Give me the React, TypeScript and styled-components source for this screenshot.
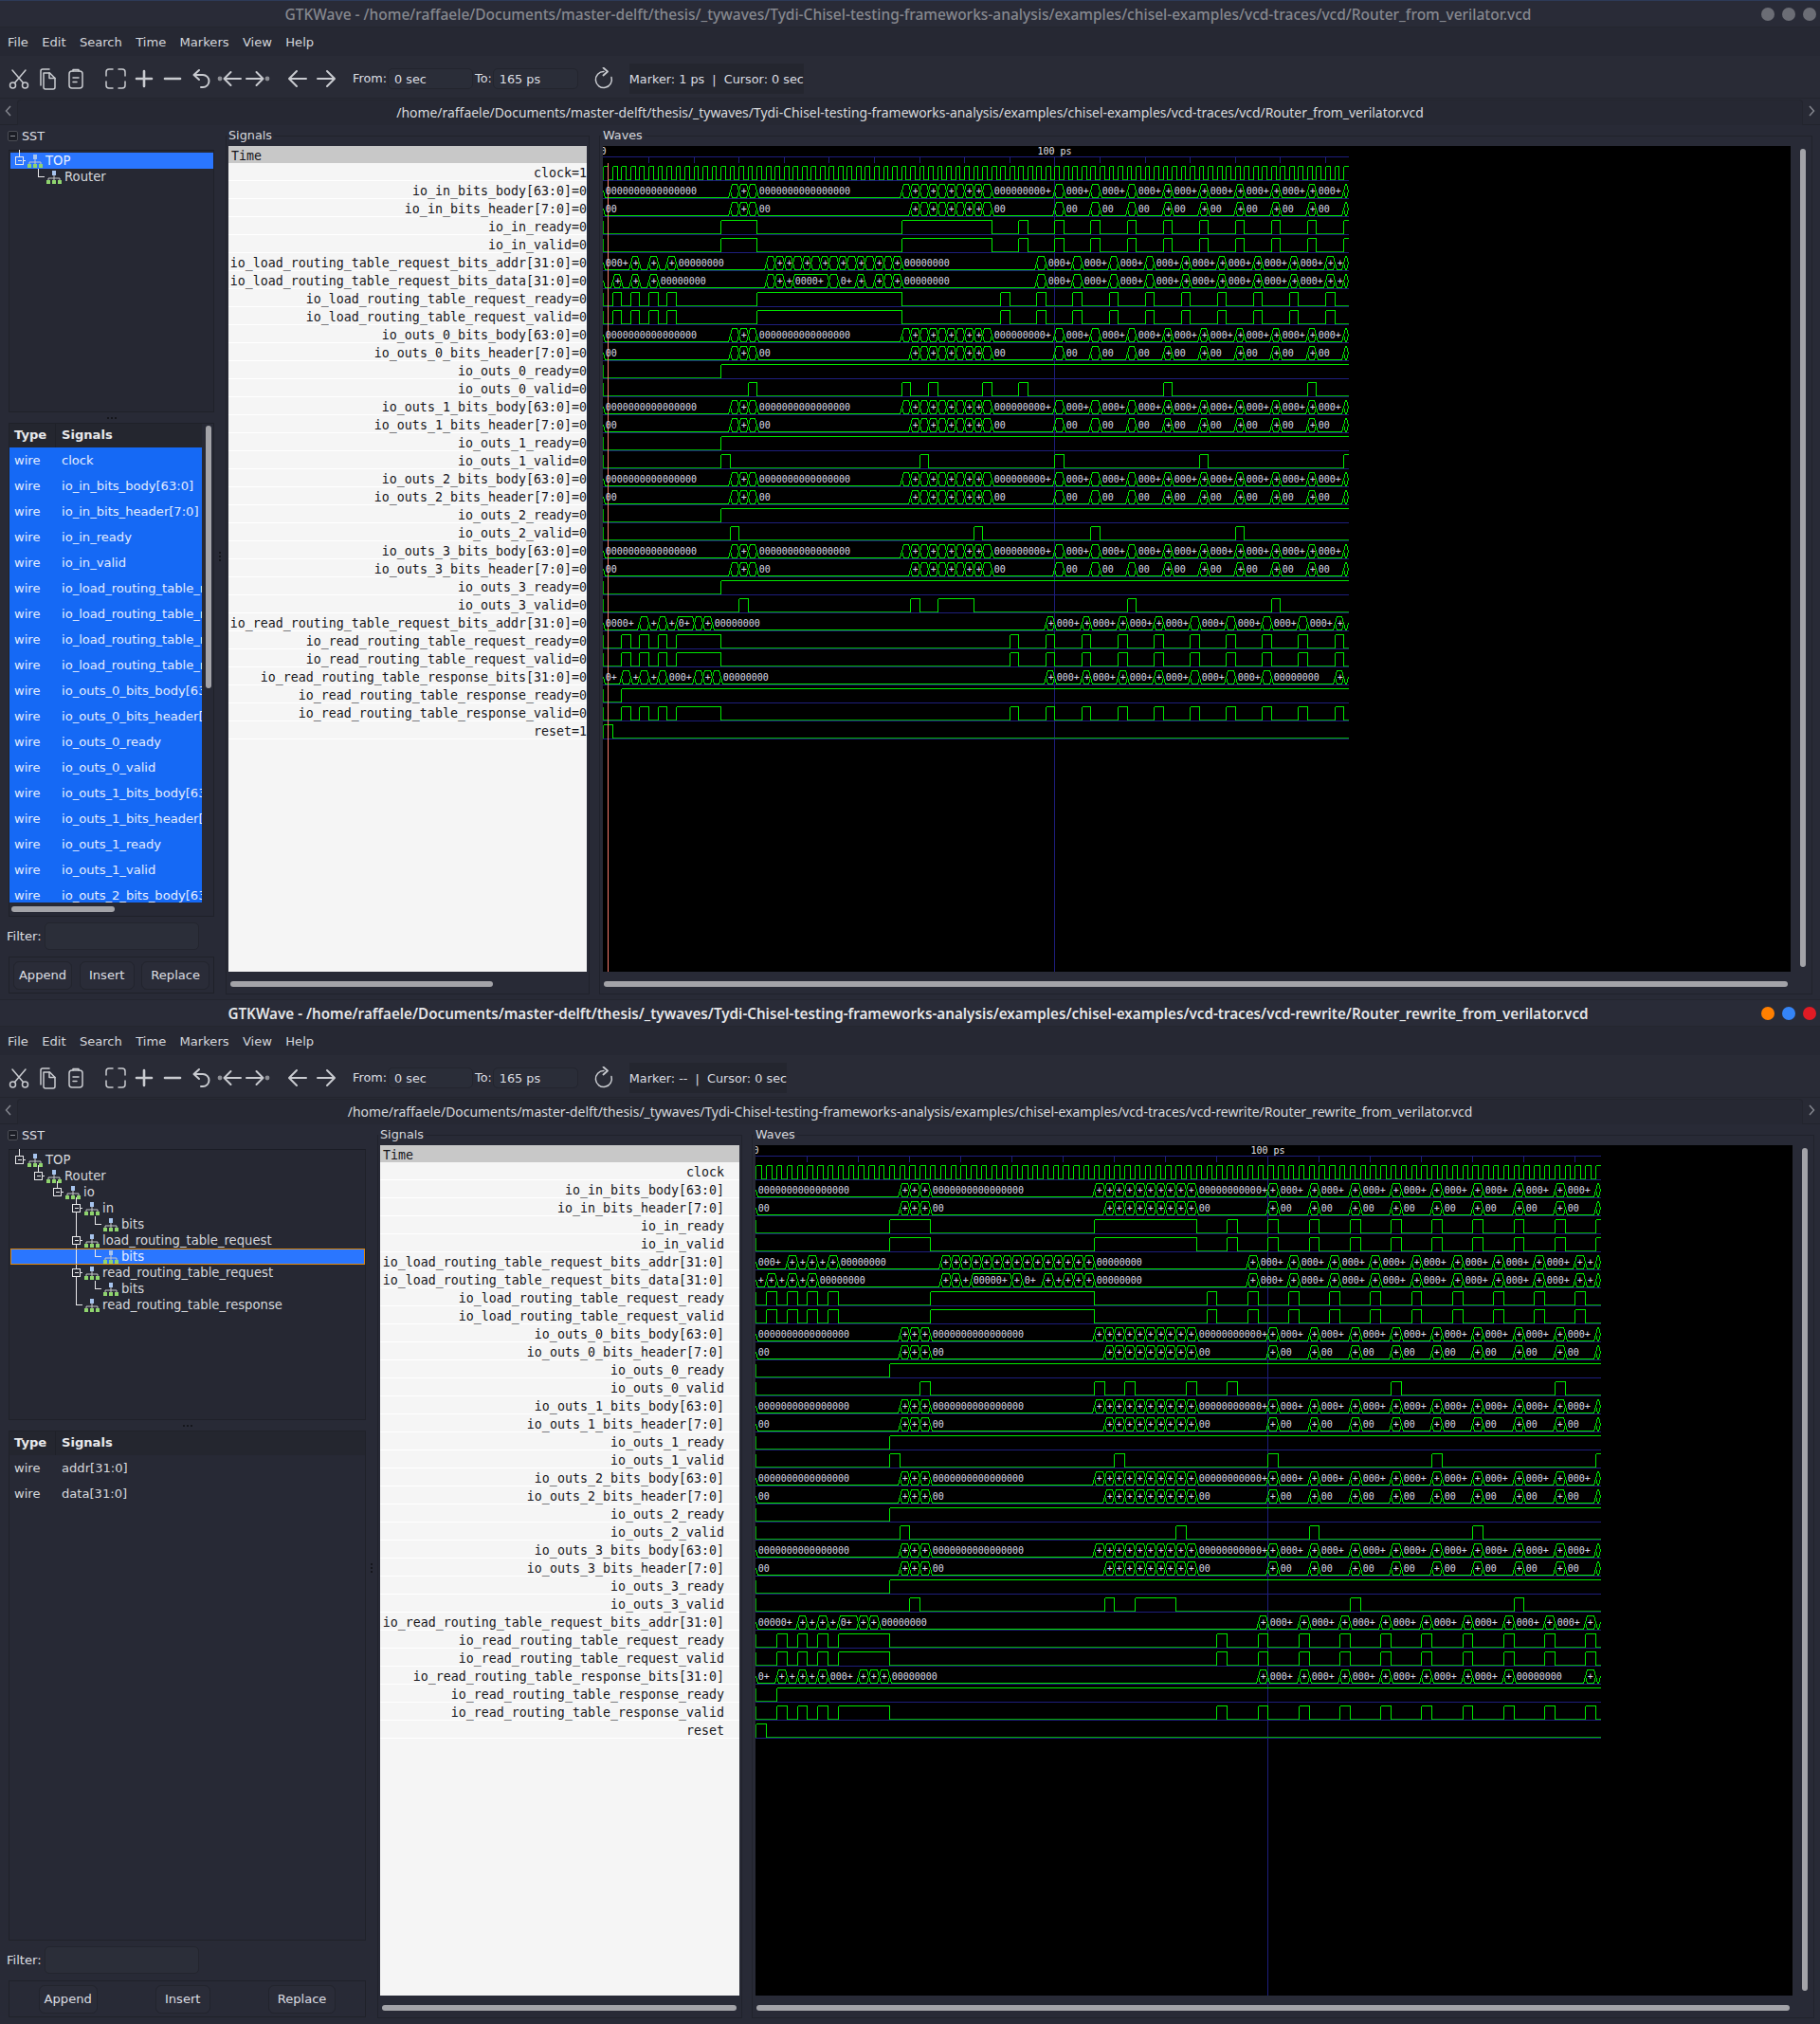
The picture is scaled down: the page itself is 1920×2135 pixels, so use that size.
import React from "react";
import styled, { createGlobalStyle } from "styled-components";

const UI = `"DejaVu Sans", "Noto Sans", sans-serif`;
const MONO = `"DejaVu Sans Mono", "Liberation Mono", monospace`;

const GlobalStyle = createGlobalStyle`
  html, body { margin: 0; padding: 0; background: #282a36; }
  * { box-sizing: border-box; }
`;

/* ---------- window chrome ---------- */
const Page = styled.div`
  width: 1920px;
  display: flex;
  flex-direction: column;
  font-family: ${UI};
  font-size: 13.1px;
  color: #dcdee3;
`;
const Win = styled.div<{ $h: number }>`
  height: ${(p) => p.$h}px;
  display: flex;
  flex-direction: column;
  background: #282a36;
  overflow: hidden;
`;
const TitleBar = styled.header<{ $active: boolean }>`
  height: 29px;
  flex: none;
  display: grid;
  grid-template-columns: 1fr auto 1fr;
  align-items: center;
  padding-right: 4px;
  background: #292b37;
  border-top: 1px solid ${(p) => (p.$active ? "#23252f" : "#2d3a58")};
  border-bottom: 1px solid #24262f;
  color: ${(p) => (p.$active ? "#e4e5e8" : "#85878e")};
  font-family: "Noto Sans", sans-serif;
  font-size: ${(p) => (p.$active ? 15.2 : 15.5)}px;
  font-weight: ${(p) => (p.$active ? 600 : 500)};
  white-space: nowrap;
`;
const TitleText = styled.span`
  grid-column: 2;
`;
const Dots = styled.div`
  grid-column: 3;
  justify-self: end;
  display: flex;
  gap: 8px;
`;
const Dot = styled.i<{ $c: string }>`
  display: block;
  width: 14px;
  height: 14px;
  border-radius: 50%;
  background: ${(p) => p.$c};
`;
const MenuBar = styled.nav`
  height: 30px;
  flex: none;
  display: flex;
  align-items: center;
  gap: 14.3px;
  padding: 0 0 0 8px;
  background: #262833;
  color: #d4d6db;
`;
const MenuItem = styled.span``;
const Toolbar = styled.div`
  height: 45px;
  flex: none;
  display: flex;
  align-items: center;
  padding: 3px 0 0 5px;
  background: #292b36;
  border-bottom: 1px solid #23252e;
  font-size: 12.8px;
`;
const ToolButton = styled.span<{ $gap?: number }>`
  width: 30px;
  height: 30px;
  margin-left: ${(p) => p.$gap || 0}px;
  display: flex;
  align-items: center;
  justify-content: center;
  svg { display: block; fill: none; stroke: #c9cbd0; stroke-width: 1.5; stroke-linecap: round; stroke-linejoin: round; }
`;
const ToolLabel = styled.span<{ $ml: number }>`
  margin-left: ${(p) => p.$ml}px;
  color: #dcdee3;
`;
const RangeInput = styled.span<{ $ml: number }>`
  width: 90px;
  height: 22px;
  margin-left: ${(p) => p.$ml}px;
  padding-left: 6px;
  line-height: 21px;
  border: 1px solid #23252e;
  border-radius: 5px;
  background: #2a2d38;
`;
const ReadOut = styled.div`
  margin-left: 12px;
  height: 32px;
  padding-top: 1px;
  display: flex;
  align-items: center;
  background: #24262f;
  white-space: pre;
`;
const TabStrip = styled.div`
  height: 28px;
  flex: none;
  display: grid;
  grid-template-columns: 18px 1fr 18px;
  align-items: stretch;
  background: #282a35;
`;
const TabArrow = styled.span<{ $side: "l" | "r" }>`
  display: flex;
  align-items: center;
  justify-content: center;
  padding-bottom: 2px;
  color: #7f8189;
  background: #282a35;
  border-bottom: 1px solid #22242d;
  svg { display: block; fill: none; stroke: #83858d; stroke-width: 1.5; }
`;
const Tab = styled.div`
  margin-top: 1px;
  padding-bottom: 2px;
  display: flex;
  align-items: center;
  justify-content: center;
  background: #262833;
  border: 1px solid #23252e;
  border-bottom: 0;
  border-radius: 4px 4px 0 0;
  color: #d8dade;
  font-family: "Noto Sans", sans-serif;
  font-size: 13.93px;
  white-space: nowrap;
`;

/* ---------- panes ---------- */
const Content = styled.main<{ $left: number; $sig: number; $wave: number; $pb: number }>`
  flex: 1;
  min-height: 0;
  display: grid;
  grid-template-columns: ${(p) => p.$left}px 12px ${(p) => p.$sig}px 10px ${(p) => p.$wave}px;
  padding: 2px 8px ${(p) => p.$pb}px 9px;
`;
const LeftPane = styled.section`
  display: flex;
  flex-direction: column;
  min-height: 0;
`;
const SstHead = styled.div`
  height: 18px;
  flex: none;
  margin: 0 0 6px -1px;
  display: flex;
  align-items: center;
  gap: 4px;
  font-size: 12.8px;
`;
const Collapse = styled.span`
  width: 11px;
  height: 11px;
  display: flex;
  align-items: center;
  justify-content: center;
  background: #1c1e26;
  border: 1px solid #4b4d55;
  border-radius: 2px;
  &::before { content: ""; width: 5px; height: 1px; background: #8c8e95; }
`;
const TreeFrame = styled.div<{ $h: number }>`
  height: ${(p) => p.$h}px;
  flex: none;
  padding: 2px 0 1px 1px;
  background: #262833;
  border: 1px solid #1f2129;
  border-top: 1px solid #1b1d25;
`;
const TreeRow = styled.div<{ $sel?: "plain" | "focus" }>`
  height: 17px;
  display: flex;
  align-items: center;
  white-space: nowrap;
  font-size: 13.2px;
  background: ${(p) => (p.$sel ? "#2a76ff" : "transparent")};
  outline: ${(p) => (p.$sel === "focus" ? "1px solid #e0880c" : "none")};
  outline-offset: -1px;
  color: ${(p) => (p.$sel ? "#e6eeff" : "#d6d8dd")};
  svg { display: block; flex: none; overflow: visible; }
`;
const TreeLabel = styled.span`
  margin-left: 3px;
`;
const PaneGrip = styled.div`
  height: 11px;
  flex: none;
  display: flex;
  align-items: center;
  justify-content: center;
  gap: 2px;
`;
const GripDot = styled.i`
  width: 2px;
  height: 2px;
  background: #15161c;
`;
const ColumnGrip = styled.div`
  display: flex;
  flex-direction: column;
  align-items: center;
  justify-content: center;
  gap: 2px;
  padding-bottom: 10px;
`;
const ListFrame = styled.div<{ $scroll: boolean }>`
  flex: 1;
  min-height: 0;
  display: grid;
  grid-template-columns: 1fr ${(p) => (p.$scroll ? 12 : 0)}px;
  grid-template-rows: 1fr 14px;
  border: 1px solid #1f2129;
  background: #272935;
`;
const ListBody = styled.div`
  min-height: 0;
  min-width: 0;
  overflow: hidden;
`;
const ListHead = styled.div`
  height: 25px;
  display: grid;
  grid-template-columns: 49px 1fr;
  background: #24262f;
  font-weight: 700;
  color: #e8e9ec;
`;
const HeadCell = styled.span`
  padding-left: 5px;
  line-height: 24px;
  border-right: 1px solid #1f2129;
  &:last-child { padding-left: 6px; border-right: 0; }
`;
const ListRow = styled.div<{ $sel: boolean }>`
  height: 27px;
  display: grid;
  grid-template-columns: 49px 1fr;
  align-items: center;
  background: ${(p) => (p.$sel ? "#1569f5" : "transparent")};
  color: ${(p) => (p.$sel ? "#e3ecff" : "#d8dade")};
  white-space: nowrap;
  overflow: hidden;
`;
const ListType = styled.span`
  padding-left: 5px;
`;
const ListName = styled.span`
  padding-left: 6px;
`;
const ListV = styled.div`
  padding: 2px 2px 0 4px;
`;
const ListVThumb = styled.div<{ $h: number }>`
  height: ${(p) => p.$h}px;
  border-radius: 3px;
  background: #a3a3a8;
`;
const ListH = styled.div`
  padding: 4px 0 0 2px;
`;
const Thumb = styled.div<{ $w: number; $ml?: number }>`
  width: ${(p) => p.$w}px;
  height: 6px;
  margin-left: ${(p) => p.$ml || 0}px;
  border-radius: 3px;
  background: #a3a3a8;
`;
const FilterRow = styled.div`
  height: 29px;
  flex: none;
  margin: 6px 0 7px -2px;
  display: flex;
  align-items: center;
`;
const FilterBox = styled.span`
  width: 163px;
  height: 29px;
  margin-left: 3px;
  border: 1px solid #23252e;
  border-radius: 5px;
  background: #2b2e39;
`;
const ButtonFrame = styled.div`
  height: 39px;
  flex: none;
  margin-bottom: 1px;
  display: flex;
  align-items: center;
  justify-content: space-around;
  border: 1px solid #1f2129;
`;
const Button = styled.span<{ $px: number }>`
  height: 30px;
  padding: 0 ${(p) => p.$px}px;
  display: flex;
  align-items: center;
  border: 1px solid #22242d;
  border-radius: 6px;
  background: #2a2c38;
  color: #dcdee3;
`;
const Frame = styled.fieldset<{ $pl: number; $pr: number }>`
  min-width: 0;
  min-height: 0;
  margin: 0;
  padding: 2px ${(p) => p.$pr}px 0 ${(p) => p.$pl}px;
  border: 1px solid #20222b;
  display: flex;
  flex-direction: column;
`;
const Legend = styled.legend<{ $ml?: number }>`
  margin-left: ${(p) => p.$ml || 0}px;
  padding: 0 2px;
  line-height: 18px;
  font-size: 12.8px;
  color: #d6d8dd;
`;
const SignalSheet = styled.div`
  flex: 1;
  min-height: 0;
  overflow: hidden;
  background: #f5f5f5;
  font-family: ${MONO};
  font-size: 13.3px;
  color: #15151a;
`;
const TimeHead = styled.div`
  height: 18px;
  padding-left: 3px;
  line-height: 22px;
  background: #c8c8c8;
`;
const SignalRow = styled.div<{ $pr: number }>`
  height: 19px;
  padding-right: ${(p) => p.$pr}px;
  line-height: 22px;
  text-align: right;
  white-space: nowrap;
  border-bottom: 1px solid #ffffff;
`;
const HTrack = styled.div`
  height: 23px;
  flex: none;
  padding: 10px 0 0 2px;
`;
const WaveArea = styled.div`
  flex: 1;
  min-height: 0;
  display: flex;
`;
const Black = styled.div`
  flex: 1;
  min-width: 0;
  background: #000;
  svg { display: block; width: 100%; height: 100%; font-family: ${MONO}; font-size: 10px; }
`;
const VTrack = styled.div`
  width: 22px;
  flex: none;
  padding: 3px 6px 5px 10px;
  display: flex;
`;
const VThumb = styled.div`
  flex: 1;
  border-radius: 3px;
  background: #a3a3a8;
`;

/* ---------- icons ---------- */
const Ic = ({ w = 24, children }: { w?: number; children: React.ReactNode }) => (
  <svg width={w} height={24} viewBox={`0 0 ${w} 24`}>{children}</svg>
);
const Tools = () => (
  <>
    <ToolButton><Ic>
      <circle cx="5.5" cy="19" r="3" /><circle cx="18.5" cy="19" r="3" />
      <path d="M7.5 16.5 19 3M16.5 16.5 5 3" />
    </Ic></ToolButton>
    <ToolButton><Ic>
      <path d="M8 6h6.5L20 11.500V21a2 2 0 0 1-2 2H10a2 2 0 0 1-2-2z" />
      <path d="M5 19V4a2 2 0 0 1 2-2h7" />
      <path d="M14 6v5.500h6" />
    </Ic></ToolButton>
    <ToolButton><Ic>
      <rect x="5" y="4" width="14" height="18" rx="3" />
      <path d="M9 4V2.500h6V4M9 11h6M9 15.500h4" />
    </Ic></ToolButton>
    <ToolButton $gap={12}><Ic>
      <path d="M2 9V5a3 3 0 0 1 3-3h4M15 2h4a3 3 0 0 1 3 3v4M22 15v4a3 3 0 0 1-3 3h-4M9 22H5a3 3 0 0 1-3-3v-4" />
    </Ic></ToolButton>
    <ToolButton><Ic><path style={{ strokeWidth: 2.6 }} d="M4 12h16M12 4v16" /></Ic></ToolButton>
    <ToolButton><Ic><path style={{ strokeWidth: 2.6 }} d="M4 12h16" /></Ic></ToolButton>
    <ToolButton><Ic>
      <path style={{ strokeWidth: 2 }} d="M10 3 4.500 8l5.500 5M5 8h9a6.500 6.500 0 0 1 0 13h-2" />
    </Ic></ToolButton>
    <ToolButton><Ic w={26}>
      <circle cx="3" cy="12" r="2.400" fill="#8c8e94" stroke="none" />
      <path style={{ strokeWidth: 2 }} d="M25 12H8M14.500 5 7.500 12l7 7" />
    </Ic></ToolButton>
    <ToolButton><Ic w={26}>
      <circle cx="23" cy="12" r="2.400" fill="#8c8e94" stroke="none" />
      <path style={{ strokeWidth: 2 }} d="M1 12h17M11.500 5l7 7-7 7" />
    </Ic></ToolButton>
    <ToolButton $gap={12}><Ic><path style={{ strokeWidth: 2 }} d="M21 12H3.500M11 4l-8 8 8 8" /></Ic></ToolButton>
    <ToolButton><Ic><path style={{ strokeWidth: 2 }} d="M3 12h17.500M13 4l8 8-8 8" /></Ic></ToolButton>
  </>
);
const TreeIcon = () => (
  <svg width="16" height="14" viewBox="0 0 16 14">
    <rect x="6" y="0" width="4" height="5" fill="#a7c4ee" />
    <path d="M8 5v3M2 8h12M2 8v2M14 8v2M8 8v2" stroke="#c6c8cc" fill="none" />
    <rect x="0" y="10" width="4" height="4" fill="#8fd46e" />
    <rect x="6" y="10" width="4" height="4" fill="#8fd46e" />
    <rect x="12" y="10" width="4" height="4" fill="#8fd46e" />
  </svg>
);
const Guide = ({ d, kind, lines }: { d: number; kind: "box" | "leaf"; lines: number[] }) => {
  const w = 18 + 20 * d;
  const cx = 9.5 + 20 * d;
  return (
    <svg width={w} height={17} viewBox={`0 0 ${w} 17`} shapeRendering="crispEdges">
      <g stroke="#e8e8ea" fill="none">
        {lines.map((l) =>
          l === cx ? (
            <path key={l} d={`M${l} 12.500V17.500`} />
          ) : (
            <path key={l} d={`M${l} -0.5V17.500`} />
          )
        )}
        {kind === "box" ? (
          <>
            <path d={`M${cx} -3V4`} />
            <rect x={cx - 4} y={4.500} width="8" height="8" />
            <path d={`M${cx - 2} 8.500h4M${cx + 4} 8.500h2`} />
          </>
        ) : (
          <path d={`M${cx} -0.5V8.500H${cx + 6}`} />
        )}
      </g>
    </svg>
  );
};

/* ---------- trace data (times in ps) ---------- */
type Bit = { kind: "bit"; init: number; edges: number[] };
type Bus = { kind: "bus"; value: string; segs: [number, boolean][] };
type Trace = { name: string; now: string; wave: Bit | Bus };

const range = (a: number, b: number, step = 2) => {
  const out: number[] = [];
  for (let t = a; t < b; t += step) out.push(t);
  return out;
};
const nz = (a: number, b: number) => range(a, b).map((t) => `${t}n`).join(" ");
const parse = (s: string) =>
  s.split(" ").filter(Boolean).map((p) => [parseInt(p, 10), p.endsWith("n")] as [number, boolean]);
const bit = (edges: number[], init = 0): Bit => ({ kind: "bit", init, edges });
const bus = (value: string, s: string): Bus => ({ kind: "bus", value, segs: parse(s) });
const pulses = (...starts: number[]) => starts.flatMap((t) => [t, t + 2]);

const tailA = "86z 100n 102z 108n 110z 116n 118z 124n 126z 132n 134z 140n 142z 148n 150z 156n 158z 164n";
const tailB = "66z 96n 98z 104n 106z 112n 114z 120n 122z 128n 130z 136n 138z 144n 146z 152n 154z 160n 162z 164n";
const Z16 = "0000000000000000";
const Z8 = "00000000";
const Z2 = "00";
const BODY = `0z 28n 30n 32n 34z ${nz(66, 86)} ${tailA}`;
const HEAD = `0z 28n 30n 32n 34z ${nz(68, 86)} ${tailA}`;
const ADDR = `0z 6n 8z 10n 12z 14n 16z ${nz(36, 66)} ${tailB}`;
const DATA = `0z 2n 4z 6n 8z 10n 12z 36n 38n 40z 42n 50n 52z 56n 58z 60n 62n 64n ${tailB}`;
const RADDR = "0z 8n 10z 12n 14z 16n 20n 22n 24z 98n 100z 106n 108z 114n 116z 122n 124z 130n 132z 138n 140z 146n 148z 154n 156z 162n 164z";
const RRESP = "0z 4n 6z 8n 10z 12n 14z 20n 22n 24n 26z 98n 100z 106n 108z 114n 116z 122n 124z 130n 132z 138n 140z 146n 148z 162n 164z";

const IN_READY = [26, 34, 66, 86, ...pulses(92, 100, 108, 116, 124, 132, 140, 148, 156), 164];
const LOAD_READY = [...pulses(2, 6, 10, 14), 34, 66, ...pulses(88, 96, 104, 112, 120, 128, 136, 144, 152, 160)];
const READ_READY = [...pulses(4, 8, 12), 16, 26, ...pulses(90, 98, 106, 114, 122, 130, 138, 146, 154, 162)];

const TRACES: Trace[] = [
  { name: "clock", now: "1", wave: bit(range(1, 165, 1), 1) },
  { name: "io_in_bits_body[63:0]", now: "0", wave: bus(Z16, BODY) },
  { name: "io_in_bits_header[7:0]", now: "0", wave: bus(Z2, HEAD) },
  { name: "io_in_ready", now: "0", wave: bit(IN_READY) },
  { name: "io_in_valid", now: "0", wave: bit(IN_READY) },
  { name: "io_load_routing_table_request_bits_addr[31:0]", now: "0", wave: bus(Z8, ADDR) },
  { name: "io_load_routing_table_request_bits_data[31:0]", now: "0", wave: bus(Z8, DATA) },
  { name: "io_load_routing_table_request_ready", now: "0", wave: bit(LOAD_READY) },
  { name: "io_load_routing_table_request_valid", now: "0", wave: bit(LOAD_READY) },
  { name: "io_outs_0_bits_body[63:0]", now: "0", wave: bus(Z16, BODY) },
  { name: "io_outs_0_bits_header[7:0]", now: "0", wave: bus(Z2, HEAD) },
  { name: "io_outs_0_ready", now: "0", wave: bit([26]) },
  { name: "io_outs_0_valid", now: "0", wave: bit(pulses(32, 66, 72, 84, 92, 124, 156)) },
  { name: "io_outs_1_bits_body[63:0]", now: "0", wave: bus(Z16, BODY) },
  { name: "io_outs_1_bits_header[7:0]", now: "0", wave: bus(Z2, HEAD) },
  { name: "io_outs_1_ready", now: "0", wave: bit([26]) },
  { name: "io_outs_1_valid", now: "0", wave: bit([...pulses(26, 70, 100, 132), 164]) },
  { name: "io_outs_2_bits_body[63:0]", now: "0", wave: bus(Z16, BODY) },
  { name: "io_outs_2_bits_header[7:0]", now: "0", wave: bus(Z2, HEAD) },
  { name: "io_outs_2_ready", now: "0", wave: bit([26]) },
  { name: "io_outs_2_valid", now: "0", wave: bit(pulses(28, 82, 108, 140)) },
  { name: "io_outs_3_bits_body[63:0]", now: "0", wave: bus(Z16, BODY) },
  { name: "io_outs_3_bits_header[7:0]", now: "0", wave: bus(Z2, HEAD) },
  { name: "io_outs_3_ready", now: "0", wave: bit([26]) },
  { name: "io_outs_3_valid", now: "0", wave: bit([30, 32, 68, 70, 74, 82, 116, 118, 148, 150]) },
  { name: "io_read_routing_table_request_bits_addr[31:0]", now: "0", wave: bus(Z8, RADDR) },
  { name: "io_read_routing_table_request_ready", now: "0", wave: bit(READ_READY) },
  { name: "io_read_routing_table_request_valid", now: "0", wave: bit(READ_READY) },
  { name: "io_read_routing_table_response_bits[31:0]", now: "0", wave: bus(Z8, RRESP) },
  { name: "io_read_routing_table_response_ready", now: "0", wave: bit([4]) },
  { name: "io_read_routing_table_response_valid", now: "0", wave: bit(READ_READY) },
  { name: "reset", now: "1", wave: bit([2], 1) },
];

/* window 1 is narrow enough that two-ps bus slots only sometimes hold a "+" */
const PLUS_NARROW = new Set([
  2, 6, 10, 14, 22, 30, 38, 40, 44, 48, 52, 56, 60, 64, 68, 72, 76, 80, 82, 98, 106, 114, 122, 124, 128, 132, 136, 140,
  144, 148, 152, 156, 160, 162,
]);

const HIGH = "#00e800";
const LOW = "#00ac00";
const GRID = "#1e1e7c";

const fit = (value: string, w: number, t: number, dt: number, narrow: boolean) => {
  if (dt === 2 && narrow) return PLUS_NARROW.has(t) ? "+" : "";
  if (w < 9) return "";
  let n = Math.floor((w - 3) / 6);
  if (dt === 4) n = 2;
  if (dt === 6) n = 4;
  if (n >= value.length) return value;
  if (n <= 1) return "+";
  return value.slice(0, n - 1) + "+";
};

const Waves = ({ scale, marker }: { scale: number; marker?: number }) => {
  const origin = 0.4;
  const X = (t: number) => Math.round(origin + t * scale) + 0.5;
  const end = X(165);
  const ticks = range(10, 165, 10);
  return (
    <svg>
      <text x={origin} y="9" textAnchor="middle" fill="#e0e0e6">0</text>
      <text x={X(100)} y="9" textAnchor="middle" fill="#e0e0e6" xmlSpace="preserve">100 ps</text>
      <g shapeRendering="crispEdges" fill="none">
        <path stroke={GRID} d={`M0 11.500H${end}`} />
        {ticks.map((t) => (
          <path key={t} stroke={GRID} d={`M${X(t)} 11V${t === 100 ? 1000 : 18}`} />
        ))}
        {TRACES.map((tr, i) => (
          <path key={tr.name} stroke={GRID} d={`M0 ${36.5 + 19 * i}H${end}`} />
        ))}
        {TRACES.map((tr, i) => {
          const hi = 21.5 + 19 * i;
          const lo = 35.5 + 19 * i;
          const mid = 28.5 + 19 * i;
          const w = tr.wave;
          if (w.kind === "bit") {
            const hiD: string[] = [];
            const loD: string[] = [`M${X(0)} ${hi}V${lo}`];
            let s = w.init;
            let from = 0;
            [...w.edges, 165].forEach((e) => {
              const y = s ? hi : lo;
              const seg = `M${X(from)} ${y}H${X(e)}`;
              if (s) hiD.push(seg); else loD.push(seg);
              if (e < 165) hiD.push(`M${X(e)} ${hi}V${lo}`);
              s = 1 - s;
              from = e;
            });
            return (
              <g key={tr.name}>
                <path stroke={LOW} d={loD.join("")} />
                <path stroke={HIGH} d={hiD.join("")} />
              </g>
            );
          }
          return (
            <g key={tr.name} stroke={HIGH}>
              {w.segs.map(([t, n], k) => {
                const next = k + 1 < w.segs.length ? w.segs[k + 1][0] : 165;
                const a = X(t);
                const b = X(next);
                const d = n
                  ? `M${a} ${mid}L${a + 2} ${hi}H${b - 2}L${b} ${mid}L${b - 2} ${lo}H${a + 2}Z`
                  : `M${a} ${mid}L${a + 2} ${lo}H${b - 2}L${b} ${mid}`;
                return <path key={t} d={d} />;
              })}
            </g>
          );
        })}
        {marker !== undefined && <path stroke="#f47a6c" d={`M${X(marker)} 18V1000`} />}
      </g>
      {TRACES.map((tr, i) =>
        tr.wave.kind === "bus"
          ? tr.wave.segs.map(([t], k) => {
              const w = tr.wave as Bus;
              const next = k + 1 < w.segs.length ? w.segs[k + 1][0] : 165;
              const label = fit(w.value, X(next) - X(t), t, next - t, scale < 5);
              return label ? (
                <text key={`${i}-${t}`} x={X(t) + 2.2} y={32 + 19 * i} fill="#dcdce8">
                  {label}
                </text>
              ) : null;
            })
          : null
      )}
    </svg>
  );
};

/* ---------- list + tree data ---------- */
const LIST_A = [
  "clock", "io_in_bits_body[63:0]", "io_in_bits_header[7:0]", "io_in_ready", "io_in_valid",
  "io_load_routing_table_request_bits_addr[31:0]", "io_load_routing_table_request_bits_data[31:0]",
  "io_load_routing_table_request_ready", "io_load_routing_table_request_valid", "io_outs_0_bits_body[63:0]",
  "io_outs_0_bits_header[7:0]", "io_outs_0_ready", "io_outs_0_valid", "io_outs_1_bits_body[63:0]",
  "io_outs_1_bits_header[7:0]", "io_outs_1_ready", "io_outs_1_valid", "io_outs_2_bits_body[63:0]",
];
const LIST_B = ["addr[31:0]", "data[31:0]"];

type Node = { d: number; name: string; kind: "box" | "leaf"; lines?: number[]; sel?: "plain" | "focus" };
const TREE_A: Node[] = [
  { d: 0, name: "TOP", kind: "box", sel: "plain" },
  { d: 1, name: "Router", kind: "leaf" },
];
const TREE_B: Node[] = [
  { d: 0, name: "TOP", kind: "box" },
  { d: 1, name: "Router", kind: "box" },
  { d: 2, name: "io", kind: "box" },
  { d: 3, name: "in", kind: "box", lines: [69.5] },
  { d: 4, name: "bits", kind: "leaf", lines: [69.5] },
  { d: 3, name: "load_routing_table_request", kind: "box", lines: [69.5] },
  { d: 4, name: "bits", kind: "leaf", lines: [69.5], sel: "focus" },
  { d: 3, name: "read_routing_table_request", kind: "box", lines: [69.5] },
  { d: 4, name: "bits", kind: "leaf", lines: [69.5] },
  { d: 3, name: "read_routing_table_response", kind: "leaf" },
];

const Grip = () => (
  <PaneGrip><GripDot /><GripDot /><GripDot /></PaneGrip>
);

type WinProps = {
  active: boolean;
  height: number;
  title: string;
  tab: string;
  markerText: string;
  marker?: number;
  columns: [number, number, number];
  bottom: number;
  tree: Node[];
  treeH: number;
  list: string[];
  listSel: boolean;
  scale: number;
  sheetThumb: number;
  waveThumb: number;
  showValues: boolean;
};

const GtkWave = (p: WinProps) => (
  <Win $h={p.height}>
    <TitleBar $active={p.active}>
      <TitleText>{p.title}</TitleText>
      <Dots>
        <Dot $c={p.active ? "#ff7f00" : "#6b6d75"} />
        <Dot $c={p.active ? "#3584f6" : "#6b6d75"} />
        <Dot $c={p.active ? "#e01b24" : "#6b6d75"} />
      </Dots>
    </TitleBar>
    <MenuBar>
      {["File", "Edit", "Search", "Time", "Markers", "View", "Help"].map((m) => (
        <MenuItem key={m}>{m}</MenuItem>
      ))}
    </MenuBar>
    <Toolbar>
      <Tools />
      <ToolLabel $ml={13}>From:</ToolLabel>
      <RangeInput $ml={1}>0 sec</RangeInput>
      <ToolLabel $ml={2}>To:</ToolLabel>
      <RangeInput $ml={1}>165 ps</RangeInput>
      <ToolButton $gap={12}>
        <Ic>
          <path d="M12 4.500a8.500 8.500 0 1 0 8 6" />
          <path style={{ strokeWidth: 1.8 }} d="M11.500 0.500 16 4.500l-4.500 4" />
        </Ic>
      </ToolButton>
      <ReadOut>{p.markerText}</ReadOut>
    </Toolbar>
    <TabStrip>
      <TabArrow $side="l">
        <svg width="8" height="12" viewBox="0 0 8 12"><path d="M6 1 1.500 6 6 11" /></svg>
      </TabArrow>
      <Tab>{p.tab}</Tab>
      <TabArrow $side="r">
        <svg width="8" height="12" viewBox="0 0 8 12"><path d="M2 1l4.500 5L2 11" /></svg>
      </TabArrow>
    </TabStrip>
    <Content $left={p.columns[0]} $sig={p.columns[1]} $wave={p.columns[2]} $pb={p.bottom}>
      <LeftPane>
        <SstHead><Collapse />SST</SstHead>
        <TreeFrame $h={p.treeH}>
          {p.tree.map((n, i) => (
            <TreeRow key={i} $sel={n.sel}>
              <Guide d={n.d} kind={n.kind} lines={n.lines || []} />
              <TreeIcon />
              <TreeLabel>{n.name}</TreeLabel>
            </TreeRow>
          ))}
        </TreeFrame>
        <Grip />
        <ListFrame $scroll={p.listSel}>
          <ListBody>
            <ListHead>
              <HeadCell>Type</HeadCell>
              <HeadCell>Signals</HeadCell>
            </ListHead>
            {p.list.map((n) => (
              <ListRow key={n} $sel={p.listSel}>
                <ListType>wire</ListType>
                <ListName>{n}</ListName>
              </ListRow>
            ))}
          </ListBody>
          <ListV>{p.listSel && <ListVThumb $h={277} />}</ListV>
          <ListH>{p.listSel && <Thumb $w={109} />}</ListH>
        </ListFrame>
        <FilterRow>
          Filter:
          <FilterBox />
        </FilterRow>
        <ButtonFrame>
          <Button $px={5}>Append</Button>
          <Button $px={9}>Insert</Button>
          <Button $px={9}>Replace</Button>
        </ButtonFrame>
      </LeftPane>
      <ColumnGrip><GripDot /><GripDot /><GripDot /></ColumnGrip>
      <Frame $pl={2} $pr={2}>
        <Legend $ml={-2}>Signals</Legend>
        <SignalSheet>
          <TimeHead>Time</TimeHead>
          {TRACES.map((t) => (
            <SignalRow key={t.name} $pr={p.showValues ? 0 : 16}>
              {p.showValues ? `${t.name}=${t.now}` : t.name}
            </SignalRow>
          ))}
        </SignalSheet>
        <HTrack><Thumb $w={p.sheetThumb} /></HTrack>
      </Frame>
      <div />
      <Frame $pl={3} $pr={0}>
        <Legend $ml={-2}>Waves</Legend>
        <WaveArea>
          <Black><Waves scale={p.scale} marker={p.marker} /></Black>
          <VTrack><VThumb /></VTrack>
        </WaveArea>
        <HTrack><Thumb $w={p.waveThumb} $ml={-1} /></HTrack>
      </Frame>
    </Content>
  </Win>
);

const BASE = "/home/raffaele/Documents/master-delft/thesis/_tywaves/Tydi-Chisel-testing-frameworks-analysis/examples/chisel-examples/vcd-traces";

export default function App() {
  return (
    <Page>
      <GlobalStyle />
      <GtkWave
        active={false}
        height={1054}
        title={`GTKWave - ${BASE}/vcd/Router_from_verilator.vcd`}
        tab={`${BASE}/vcd/Router_from_verilator.vcd`}
        markerText="Marker: 1 ps  |  Cursor: 0 sec"
        marker={1}
        columns={[217, 384, 1280]}
        bottom={5}
        tree={TREE_A}
        treeH={277}
        list={LIST_A}
        listSel
        scale={4.76}
        sheetThumb={277}
        waveThumb={1249}
        showValues
      />
      <GtkWave
        active
        height={1081}
        title={`GTKWave - ${BASE}/vcd-rewrite/Router_rewrite_from_verilator.vcd`}
        tab={`${BASE}/vcd-rewrite/Router_rewrite_from_verilator.vcd`}
        markerText="Marker: --  |  Cursor: 0 sec"
        columns={[377, 385, 1121]}
        bottom={6}
        tree={TREE_B}
        treeH={286}
        list={LIST_B}
        listSel={false}
        scale={5.4}
        sheetThumb={374}
        waveThumb={1090}
        showValues={false}
      />
    </Page>
  );
}
